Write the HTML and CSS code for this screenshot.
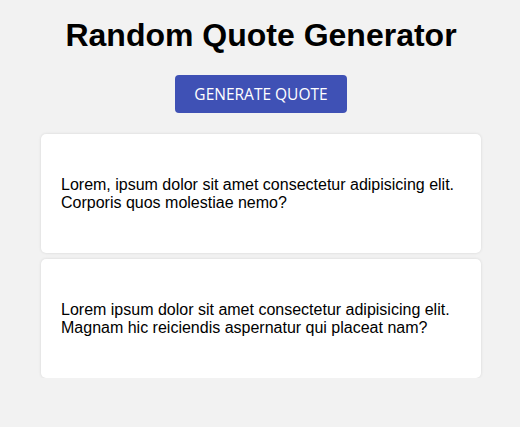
FILE: index.html
```
<!DOCTYPE html>
<html>
<head>
<meta charset="utf-8">
<link rel="stylesheet" href="styles.css">
</head>
<body>
<main class="app">
  <h1 class="title">Random Quote Generator</h1>
  <button class="btn">GENERATE QUOTE</button>
  <section class="quotes">
    <div class="card"><p>Lorem, ipsum dolor sit amet consectetur adipisicing elit. Corporis quos molestiae nemo?</p></div>
    <div class="card"><p>Lorem ipsum dolor sit amet consectetur adipisicing elit. Magnam hic reiciendis aspernatur qui placeat nam?</p></div>
  </section>
</main>
</body>
</html>
```
FILE: styles.css
```
html, body {
  margin: 0;
  padding: 0;
  background: #f2f2f2;
}
body {
  font-family: "Liberation Sans", Arial, sans-serif;
  color: #000;
}
.app {
  display: flex;
  flex-direction: column;
  align-items: center;
  padding-top: 17px;
  padding-left: 2px;
}
.title {
  margin: 0;
  font-size: 32px;
  font-weight: bold;
  line-height: 37px;
}
.btn {
  margin-top: 21px;
  width: 172px;
  height: 38px;
  background: #3f51b5;
  color: #fff;
  border: none;
  border-radius: 4px;
  font-family: "Open Sans", "Noto Sans", sans-serif;
  font-size: 15.5px;
  padding: 0;
}
.quotes {
  margin-top: 21px;
  display: flex;
  flex-direction: column;
  gap: 6px;
  width: 440px;
}
.card {
  background: #fff;
  border-radius: 5px;
  height: 119px;
  box-shadow: 0 0 3px rgba(0,0,0,0.12);
  display: flex;
  align-items: center;
  padding: 0 20px;
  box-sizing: border-box;
}
.card p {
  margin: 0;
  font-size: 16px;
  line-height: 18px;
}
```
